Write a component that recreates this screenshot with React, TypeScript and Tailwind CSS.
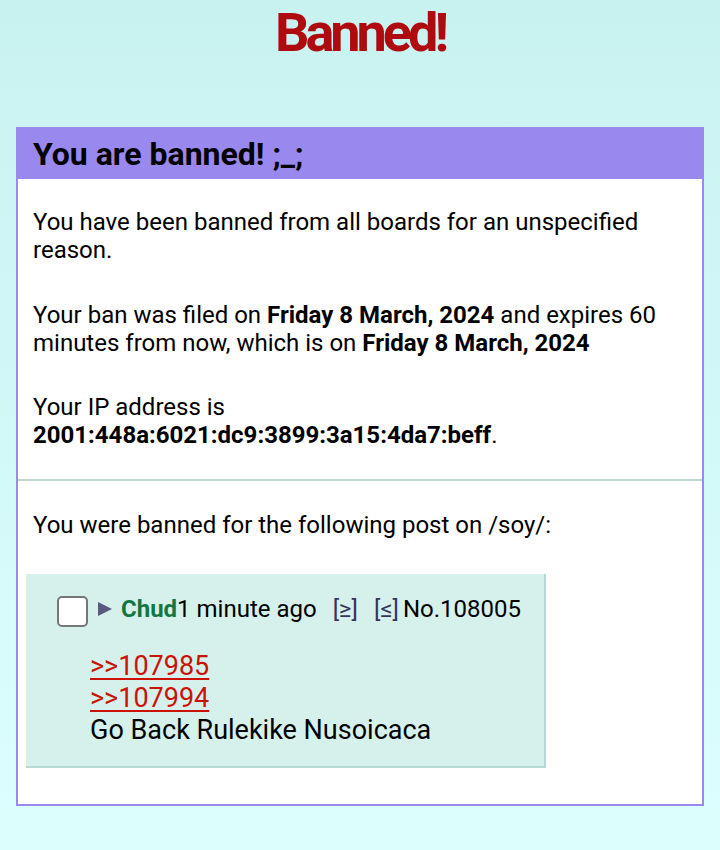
import React from 'react';

const App = () => {
  return (
    <div
      className="min-h-[850px] bg-gradient-to-b from-[#c8f2f0] to-[#dcfffd] pb-10 text-black"
      style={{ fontFamily: 'Roboto, "Noto Sans", sans-serif' }}
    >
      {/* Title */}
      <h1 className="pt-[5px] text-center text-[54px] font-bold leading-[56px] tracking-[-4px] text-[#af0a0f]">
        Banned!
      </h1>

      {/* Ban box */}
      <div className="mx-4 mt-[66px] border-2 border-[#9988ee] bg-white">
        <h2 className="bg-[#9988ee] px-[15px] py-[10px] text-[32px] font-bold leading-[30px]">
          You are banned! ;_;
        </h2>

        <div className="px-[15px] pt-[29px] pb-[30px] text-[24px] leading-[28px]">
          <p>You have been banned from all boards for an unspecified reason.</p>
          <p className="mt-[37px]">
            Your ban was filed on <b>Friday 8 March, 2024</b> and expires 60 minutes from now, which is on{' '}
            <b>Friday 8 March, 2024</b>
          </p>
          <p className="mt-[36px]">
            Your IP address is
            <br />
            <b>2001:448a:6021:dc9:3899:3a15:4da7:beff</b>.
          </p>
        </div>

        <hr className="border-0 border-t-2 border-[#bfd6d3]" />

        <div className="pt-[30px] pb-[36px] text-[24px] leading-[28px]">
          <p className="px-[15px]">You were banned for the following post on /soy/:</p>

          {/* Post */}
          <div className="mt-[35px] ml-2 w-[520px] border-r-2 border-b-2 border-[#b7d9d4] bg-[#d6f0ec] pl-[31px] pt-[22px] pb-[20px]">
            <div className="flex h-[31px] items-center">
              <span className="mr-[10px] h-[31px] w-[31px] shrink-0 rounded-[5px] border-2 border-[#767676] bg-white" />
              <svg className="mr-[9px] -mt-[6px]" width="14" height="14" viewBox="0 0 14 14">
                <path d="M0 0 L14 7 L0 14 Z" fill="#5a5a80" />
              </svg>
              <span className="-mt-[6px] font-bold text-[#117743]">Chud</span>
              <span className="-mt-[6px]">1 minute ago</span>
              <span className="-mt-[6px] ml-[16px] text-[#34345c]">[≥]</span>
              <span className="-mt-[6px] ml-[16px] text-[#34345c]">[≤]</span>
              <span className="-mt-[6px] ml-[4px]">No.108005</span>
            </div>
            <div className="mt-[23px] pl-[33px] text-[27px] leading-[32px]">
              <a className="block text-[#cc1105] underline underline-offset-[3px]" href="#">&gt;&gt;107985</a>
              <a className="block text-[#cc1105] underline underline-offset-[3px]" href="#">&gt;&gt;107994</a>
              <div>Go Back Rulekike Nusoicaca</div>
            </div>
          </div>
        </div>
      </div>
    </div>
  );
};

export default App;
